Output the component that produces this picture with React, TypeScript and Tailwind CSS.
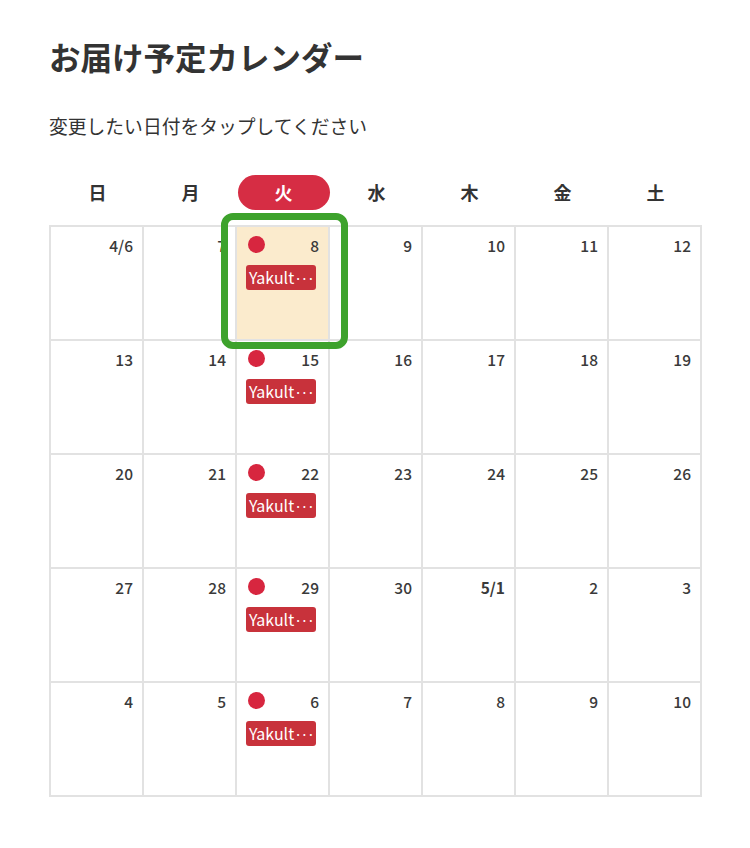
import React from "react";

const days = ["日", "月", "火", "水", "木", "金", "土"];
const weeks: string[][] = [
  ["4/6", "7", "8", "9", "10", "11", "12"],
  ["13", "14", "15", "16", "17", "18", "19"],
  ["20", "21", "22", "23", "24", "25", "26"],
  ["27", "28", "29", "30", "5/1", "2", "3"],
  ["4", "5", "6", "7", "8", "9", "10"],
];

export default function App() {
  return (
    <div
      className="w-[750px] h-[848px] bg-white text-[#333]"
      style={{ fontFamily: '"Noto Sans CJK JP", "Noto Sans", sans-serif' }}
    >
      <div className="pl-[49px] pt-[34px]">
        <h1 className="text-[31.5px] leading-[44px] font-bold text-[#333]">
          お届け予定カレンダー
        </h1>
        <p className="mt-[36px] text-[18.8px] leading-[24px] text-[#333]">
          変更したい日付をタップしてください
        </p>
        <div className="mt-[37px] w-[653px] grid grid-cols-[2px_repeat(7,93px)]">
          <div />
          {days.map((d, i) =>
            i === 2 ? (
              <div key={d} className="h-[35px] flex items-center justify-center">
                <div className="w-[92px] h-[35px] rounded-full bg-[#d62d44] text-white text-[18px] font-bold flex items-center justify-center">
                  {d}
                </div>
              </div>
            ) : (
              <div
                key={d}
                className="h-[35px] flex items-center justify-center text-[18px] font-bold text-[#333]"
              >
                {d}
              </div>
            )
          )}
        </div>
        <div className="relative mt-[15px] w-[653px] border-t-2 border-l-2 border-[#e2e2e2] grid grid-cols-7">
          {weeks.map((w, wi) =>
            w.map((d, di) => {
              const tue = di === 2;
              const hl = tue && wi === 0;
              return (
                <div
                  key={`${wi}-${di}`}
                  className={`relative h-[114px] border-r-2 border-b-2 border-[#e2e2e2] ${
                    hl ? "bg-[#fbebcd]" : "bg-white"
                  }`}
                >
                  <div
                    className={`absolute right-[9px] top-[8px] text-[15.5px] leading-[20px] ${
                      d === "5/1" ? "font-bold" : "font-medium"
                    } text-[#3a3a3a]`}
                  >
                    {d}
                  </div>
                  {tue && (
                    <>
                      <div className="absolute left-[11px] top-[9px] w-[17px] h-[17px] rounded-full bg-[#d7263f]" />
                      <div className="absolute left-[9px] top-[38px] w-[70px] h-[25px] rounded-[3px] bg-[#c8323b] text-white text-[16px] leading-[25px] pl-[3px] whitespace-nowrap overflow-hidden">
                        Yakult<span className="tracking-[-1.5px] text-[14px]">···</span>
                      </div>
                    </>
                  )}
                </div>
              );
            })
          )}
          <div className="absolute left-[170px] top-[-14px] w-[127px] h-[136px] border-[7px] border-[#3da22c] rounded-[12px]" />
        </div>
      </div>
    </div>
  );
}
